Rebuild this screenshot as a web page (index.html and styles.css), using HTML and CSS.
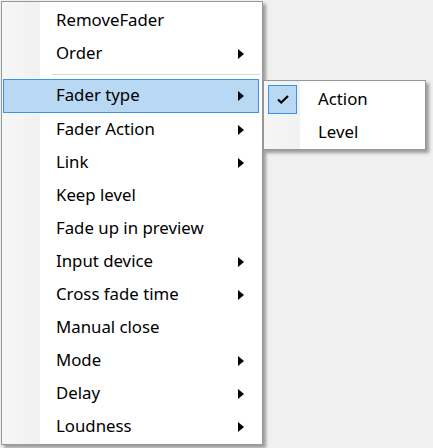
FILE: index.html
```html
<!DOCTYPE html>
<html>
<head>
<meta charset="utf-8">
<link rel="stylesheet" href="styles.css">
</head>
<body>
<div class="desk">
  <div class="menu main">
    <div class="item"><span class="label">RemoveFader</span></div>
    <div class="item"><span class="label">Order</span><svg class="arrow" width="7" height="10" viewBox="0 0 7 10"><polygon points="0,0 6,5 0,10"/></svg></div>
    <div class="sep"></div>
    <div class="item hot"><span class="label">Fader type</span><svg class="arrow" width="7" height="10" viewBox="0 0 7 10"><polygon points="0,0 6,5 0,10"/></svg></div>
    <div class="item"><span class="label">Fader Action</span><svg class="arrow" width="7" height="10" viewBox="0 0 7 10"><polygon points="0,0 6,5 0,10"/></svg></div>
    <div class="item"><span class="label">Link</span><svg class="arrow" width="7" height="10" viewBox="0 0 7 10"><polygon points="0,0 6,5 0,10"/></svg></div>
    <div class="item"><span class="label">Keep level</span></div>
    <div class="item"><span class="label">Fade up in preview</span></div>
    <div class="item"><span class="label">Input device</span><svg class="arrow" width="7" height="10" viewBox="0 0 7 10"><polygon points="0,0 6,5 0,10"/></svg></div>
    <div class="item"><span class="label">Cross fade time</span><svg class="arrow" width="7" height="10" viewBox="0 0 7 10"><polygon points="0,0 6,5 0,10"/></svg></div>
    <div class="item"><span class="label">Manual close</span></div>
    <div class="item"><span class="label">Mode</span><svg class="arrow" width="7" height="10" viewBox="0 0 7 10"><polygon points="0,0 6,5 0,10"/></svg></div>
    <div class="item"><span class="label">Delay</span><svg class="arrow" width="7" height="10" viewBox="0 0 7 10"><polygon points="0,0 6,5 0,10"/></svg></div>
    <div class="item"><span class="label">Loudness</span><svg class="arrow" width="7" height="10" viewBox="0 0 7 10"><polygon points="0,0 6,5 0,10"/></svg></div>
  </div>
  <div class="menu sub">
    <div class="item"><span class="check"><svg width="12" height="9" viewBox="0 0 12 9"><polyline points="1,4.5 4.2,7.5 11,1" fill="none" stroke="#000" stroke-width="2.2"/></svg></span><span class="label">Action</span></div>
    <div class="item"><span class="nocheck"></span><span class="label">Level</span></div>
  </div>
</div>
</body>
</html>
```

FILE: styles.css
```css
html, body {
  margin: 0;
  padding: 0;
  background: #f0f0f0;
  width: 433px;
  height: 448px;
  overflow: hidden;
}
.desk {
  position: relative;
  width: 433px;
  height: 448px;
}
.menu {
  position: absolute;
  background: #fff;
  border: 1px solid #979797;
  box-sizing: border-box;
  padding: 2px 0;
  font-family: "Noto Sans", "Open Sans", "DejaVu Sans", sans-serif;
  font-size: 16.8px;
  color: #000;
  box-shadow: 3px 3px 3px rgba(0, 0, 0, 0.35);
}
.main {
  left: 1px;
  top: 1px;
  width: 262px;
  height: 444px;
  background: linear-gradient(to right, #f6f6f6 0, #f1f1f1 38px, #fff 38px);
}
.sub {
  left: 263px;
  top: 80px;
  width: 163px;
  height: 70px;
  background: linear-gradient(to right, #f6f6f6 0, #f1f1f1 36px, #fff 36px);
}
.item {
  height: 33px;
  display: flex;
  align-items: center;
  box-sizing: border-box;
  margin: 0 3px 0 1px;
  border: 1px solid transparent;
}
.label {
  padding-bottom: 3px;
}
.main .item .label {
  margin-left: 52px;
  flex: 1;
}
.main .item.hot {
  background: #b9d8f4;
  border-color: #3d93e3;
  margin-top: -1px;
  height: 34px;
}
.arrow {
  margin-right: 13px;
  fill: #000;
}
.sep {
  height: 10px;
  display: flex;
  align-items: center;
  margin-left: 50px;
  margin-right: 2px;
}
.sep::before {
  content: "";
  display: block;
  width: 100%;
  height: 1px;
  background: #d7d7d7;
  border-bottom: 1px solid #fff;
}
.sub .item {
  margin: 0 2px;
  border: none;
}
.check, .nocheck {
  width: 29px;
  height: 29px;
  box-sizing: border-box;
  margin-left: 2px;
  display: flex;
  align-items: center;
  justify-content: center;
}
.check {
  background: #b9d8f4;
  border: 1px solid #3d93e3;
}
.sub .label {
  margin-left: 21px;
}
```
